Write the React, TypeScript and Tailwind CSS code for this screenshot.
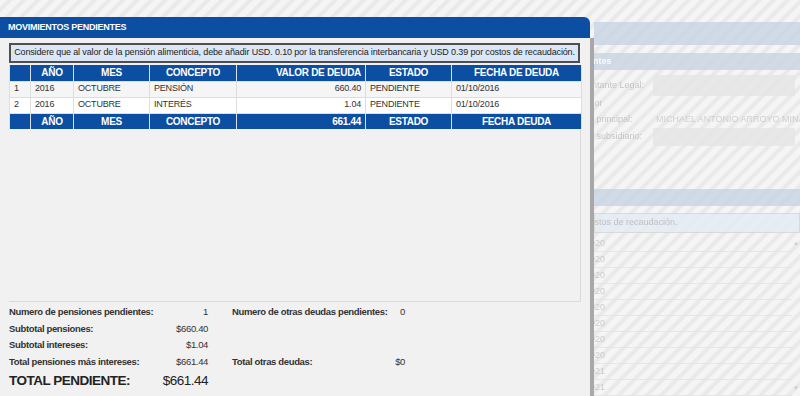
import React from "react";

type Row = {
  n: string;
  anio: string;
  mes: string;
  concepto: string;
  valor: string;
  estado: string;
  fecha: string;
};

const rows: Row[] = [
  { n: "1", anio: "2016", mes: "OCTUBRE", concepto: "PENSIÓN", valor: "660.40", estado: "PENDIENTE", fecha: "01/10/2016" },
  { n: "2", anio: "2016", mes: "OCTUBRE", concepto: "INTERÉS", valor: "1.04", estado: "PENDIENTE", fecha: "01/10/2016" },
];

const listRows = ["2020", "2020", "2020", "2020", "2020", "2020", "2020", "2020", "2021", "2021"];

// página de fondo, difuminada detrás del modal
function BackgroundPage() {
  const label = "-ml-[36px] w-[95px] shrink-0 whitespace-nowrap text-[9px] text-[#b9b9b9]";
  return (
    <div className="flex h-full">
      <div className="w-[594px] shrink-0" />
      <div className="flex min-w-0 flex-1 flex-col overflow-hidden pt-[22px] opacity-80 blur-[0.6px]">
        <div className="h-[23px] bg-[#c8d5e4]" />
        <div className="mt-[8px] flex h-[18px] items-center bg-[#c9d5e3]">
          <span className="-ml-[50px] whitespace-nowrap text-[9px] font-bold text-white">Representantes</span>
        </div>
        <div className="mt-[5px] flex h-[21px] items-center">
          <span className={label}>Representante Legal:</span>
          <div className="h-full w-[142px] shrink-0 bg-[#e6e6e6]" />
        </div>
        <div className="flex h-[16px] items-center">
          <span className={label}>Procurador</span>
        </div>
        <div className="flex h-[17px] items-center">
          <span className={label}>Obligado principal:</span>
          <span className="whitespace-nowrap pl-[3px] text-[9px] text-[#c6c6c6]">MICHAEL ANTONIO ARROYO MINA</span>
        </div>
        <div className="flex h-[18px] items-center">
          <span className={label}>Obligado subsidiario:</span>
          <div className="h-full w-[142px] shrink-0 bg-[#e6e6e6]" />
        </div>
        <div className="mt-[43px] h-[18px] bg-[#c8d5e4]" />
        <div className="mt-[7px] flex h-[20px] items-center border border-[#d4d4d4] bg-[#e4ecf6]">
          <span className="-ml-[10px] whitespace-nowrap text-[9px] text-[#b3b3b3]">costos de recaudación.</span>
        </div>
        <div className="mt-[3px] flex flex-1">
          <div className="flex flex-1 flex-col">
            {listRows.map((r, i) => (
              <div key={i} className="flex h-[16px] items-center border-b border-[#e3e3e3]">
                <span className="-ml-[9px] text-[9px] text-[#c2c2c2]">{r}</span>
              </div>
            ))}
          </div>
          <div className="flex w-[8px] flex-col items-center justify-between py-[3px] text-[6px] text-[#c4c4c4]">
            <span>▲</span>
            <span>▼</span>
          </div>
        </div>
      </div>
    </div>
  );
}

function TableHead({ footer }: { footer?: boolean }) {
  const th = "h-[16px] border-x border-[#d6e1f0] bg-[#0b4ea2] px-[4px] text-[10px] font-bold tracking-[-0.3px] text-white";
  return (
    <tr>
      <th className={th} />
      <th className={`${th} text-center`}>AÑO</th>
      <th className={`${th} text-center`}>MES</th>
      <th className={`${th} text-center`}>CONCEPTO</th>
      <th className={`${th} text-right`}>{footer ? "661.44" : "VALOR DE DEUDA"}</th>
      <th className={`${th} text-center`}>ESTADO</th>
      <th className={`${th} text-center`}>{footer ? "FECHA DEUDA" : "FECHA DE DEUDA"}</th>
    </tr>
  );
}

function SummaryLine({ label, value }: { label?: string; value?: string }) {
  return (
    <div className="flex h-[16.5px] items-center justify-between">
      <span className="font-bold">{label}</span>
      <span>{value}</span>
    </div>
  );
}

function Modal() {
  const td = "h-[16px] border border-[#dedede] px-[4px] text-[9px] tracking-[-0.2px] text-[#333]";
  return (
    <div className="absolute bottom-0 left-0 top-[17px] flex w-[594px] flex-col">
      {/* cabecera */}
      <div className="flex h-[21px] w-[590px] shrink-0 items-center rounded-tr-[6px] bg-[#0b4ea2] px-[8px]">
        <span className="text-[9px] font-bold tracking-[-0.25px] text-white">MOVIMIENTOS PENDIENTES</span>
      </div>

      {/* cuerpo */}
      <div className="flex flex-1 flex-col border-r-[4px] border-[#a8a8a8] bg-[#f1f1f1] pl-[9px] pr-[9px] pt-[5px]">
        <div className="flex h-[20px] w-[571px] items-center justify-center whitespace-nowrap border-2 border-[#4f4f4f] bg-[#dbe7f6] text-[9px] tracking-[-0.14px] text-[#222]">
          Considere que al valor de la pensión alimenticia, debe añadir USD. 0.10 por la transferencia interbancaria y USD 0.39 por costos de recaudación.
        </div>

        <div className="mt-[2px] h-[237px] w-[572px] border-b border-r border-[#dadada] bg-[#f1f1f1]">
          <table className="w-full table-fixed border-collapse">
            <colgroup>
              <col className="w-[21px]" />
              <col className="w-[43px]" />
              <col className="w-[76px]" />
              <col className="w-[87px]" />
              <col className="w-[129px]" />
              <col className="w-[86px]" />
              <col className="w-[130px]" />
            </colgroup>
            <thead>
              <TableHead />
            </thead>
            <tbody>
              {rows.map((r, i) => (
                <tr key={r.n} className={i % 2 === 0 ? "bg-[#f5f5f5]" : "bg-white"}>
                  <td className={td}>{r.n}</td>
                  <td className={td}>{r.anio}</td>
                  <td className={td}>{r.mes}</td>
                  <td className={td}>{r.concepto}</td>
                  <td className={`${td} text-right`}>{r.valor}</td>
                  <td className={td}>{r.estado}</td>
                  <td className={td}>{r.fecha}</td>
                </tr>
              ))}
              <TableHead footer />
            </tbody>
          </table>
        </div>

        {/* resumen */}
        <div className="mt-[2px] flex whitespace-nowrap text-[9.5px] tracking-[-0.35px] text-[#333]">
          <div className="flex w-[199px] flex-col">
            <SummaryLine label="Numero de pensiones pendientes:" value="1" />
            <SummaryLine label="Subtotal pensiones:" value="$660.40" />
            <SummaryLine label="Subtotal intereses:" value="$1.04" />
            <SummaryLine label="Total pensiones más intereses:" value="$661.44" />
          </div>
          <div className="ml-[24px] flex w-[173px] flex-col">
            <SummaryLine label="Numero de otras deudas pendientes:" value="0" />
            <SummaryLine />
            <SummaryLine />
            <SummaryLine label="Total otras deudas:" value="$0" />
          </div>
        </div>
        <div className="mt-[1px] flex h-[20px] w-[199px] items-center justify-between whitespace-nowrap text-[13.5px] tracking-[-0.5px] text-[#222]">
          <span className="font-bold">TOTAL PENDIENTE:</span>
          <span>$661.44</span>
        </div>
      </div>
    </div>
  );
}

export default function App() {
  return (
    <div className="relative h-[396px] w-[800px] overflow-hidden bg-[repeating-linear-gradient(135deg,#f5f5f5_0px,#f5f5f5_4px,#e9e9e9_6px,#e9e9e9_8px,#f5f5f5_10px)] font-['Liberation_Sans',Arial,sans-serif]">
      <BackgroundPage />
      <Modal />
    </div>
  );
}
